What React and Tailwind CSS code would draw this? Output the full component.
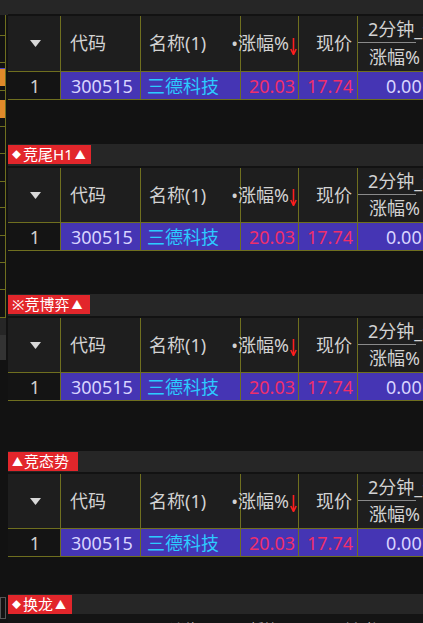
import React from 'react';

const font = "font-['Noto_Sans','Noto_Sans_CJK_SC',sans-serif]";

const sideRows = [
  { h: 'h-[27px]', fill: '' },
  { h: 'h-[28px]', fill: 'bg-[#e08a2a] border-t border-[#4a4ad0]' },
  { h: 'h-[36px]', fill: 'bg-[#e08a2a]' },
  { h: 'h-[27px]', fill: '' },
  { h: 'h-[28px]', fill: '' },
  { h: 'h-[26px]', fill: '' },
  { h: 'h-[28px]', fill: '' },
  { h: 'h-[27px]', fill: '' },
  { h: 'h-[27px]', fill: '' },
  { h: 'h-[28px]', fill: '' },
];

const SideStrip = () => (
  <div className="w-[8px] shrink-0 flex flex-col">
    <div className="h-[15px] bg-[#262626]" />
    <div className="h-[21px] w-[6px] border-r border-b border-[#6f6f1f]" />
    {sideRows.map((r, i) => (
      <div key={i} className={`${r.h} w-[6px] border-r border-b border-[#6f6f1f] flex items-center`}>
        {r.fill && <div className={`w-[5px] h-[18px] ${r.fill}`} />}
      </div>
    ))}
    <div className="h-[17px] w-[6px] bg-[#262626]" />
    <div className="h-[25px] w-[6px] bg-[#333333]" />
    <div className="flex-1" />
    <div className="h-[22px] w-[6px] border border-[#555555] mb-[4px]" />
  </div>
);

const SortArrow = () => (
  <svg width="7" height="17" viewBox="0 0 7 17" className="shrink-0 ml-[1px] mt-[5px]">
    <line x1="3.5" y1="0" x2="3.5" y2="15" stroke="#ff1e1e" strokeWidth="1.6" />
    <path d="M0.8 11 L3.5 16.5 L6.2 11" fill="none" stroke="#ff1e1e" strokeWidth="1.6" />
  </svg>
);

const Tab = ({ pre, text, post, w }) => (
  <div className={`${w} h-[19px] mt-px bg-[#e2262b] text-white text-[15px] leading-[19px] pl-[4px] whitespace-nowrap flex items-center`}>
    {pre === '◆' && <span className="text-[9px] mr-[2px]">◆</span>}
    {pre === '▲' && <span className="text-[11px] mr-[1px]">▲</span>}
    {pre === '※' && <span>※</span>}
    <span>{text}</span>
    {post && <span className="text-[11px] ml-[2px]">▲</span>}
  </div>
);

const Panel = ({ tab, barH, headH, emptyH }) => (
  <div className="flex flex-col">
    <div className={`${barH} bg-[#262626] flex items-start`}>
      {tab && <Tab {...tab} />}
    </div>
    <div className="h-[2px]" />

    <div className={`${headH} bg-[#1e1e1e] border-b border-[#6f6f1f] flex text-[18px] text-[#d2d2d2]`}>
      <div className="w-[53px] shrink-0 border-r border-[#6f6f1f] flex items-center justify-center pl-[2px]">
        <svg width="11" height="7" viewBox="0 0 11 7">
          <path d="M0 0 L11 0 L5.5 7 Z" fill="#d8d8d8" />
        </svg>
      </div>
      <div className="w-[80px] shrink-0 border-r border-[#6f6f1f] flex items-center pl-[9px]">代码</div>
      <div className="w-[100px] shrink-0 border-r border-[#6f6f1f] flex items-center pl-[8px] whitespace-nowrap">名称(1)</div>
      <div className="w-[58px] shrink-0 border-r border-[#6f6f1f] flex items-center justify-end pr-[1px] whitespace-nowrap">
        <span className="shrink-0">•涨幅%</span>
        <SortArrow />
      </div>
      <div className="w-[59px] shrink-0 border-r border-[#6f6f1f] flex items-center justify-end pr-[5px]">现价</div>
      <div className="w-[58px] shrink-0 flex flex-col">
        <div className="h-[27px] border-b border-[#8a8a8a] flex items-center pl-[10px] whitespace-nowrap">2分钟_云</div>
        <div className="flex-1 flex items-center pl-[11px] whitespace-nowrap">涨幅%</div>
      </div>
    </div>

    <div className="h-[28px] border-b border-[#6f6f1f] flex text-[18px] leading-none">
      <div className="w-[53px] shrink-0 bg-[#141414] border-r border-[#6f6f1f] flex items-center justify-center pl-[2px] text-[#d2d2d2]">1</div>
      <div className="w-[80px] shrink-0 bg-[#4535b4] border-r border-[#6f6f1f] flex items-center pl-[10px] text-[#d8d4ff]">300515</div>
      <div className="w-[100px] shrink-0 bg-[#4535b4] border-r border-[#6f6f1f] flex items-center pl-[6px] text-[#2ccbff]">三德科技</div>
      <div className="w-[58px] shrink-0 bg-[#4535b4] border-r border-[#6f6f1f] flex items-center justify-end pr-[3px] text-[#ef2f6b]">20.03</div>
      <div className="w-[59px] shrink-0 bg-[#4535b4] border-r border-[#6f6f1f] flex items-center justify-end pr-[4px] text-[#ef2f6b]">17.74</div>
      <div className="flex-1 bg-[#4535b4] flex items-center pl-[28px] text-[#d8d4ff] whitespace-nowrap">0.00</div>
    </div>

    <div className={`${emptyH} bg-[#121212]`} />
  </div>
);

export default function App() {
  return (
    <div className={`w-[423px] h-[623px] overflow-hidden bg-[#121212] flex ${font}`}>
      <SideStrip />
      <div className="flex-1 min-w-0 flex flex-col">
        <Panel barH="h-[14px]" headH="h-[56px]" emptyH="h-[44px]" />
        <Panel tab={{ pre: '◆', text: '竞尾H1', post: true, w: 'w-[83px]' }} barH="h-[22px]" headH="h-[55px]" emptyH="h-[43px]" />
        <Panel tab={{ pre: '※', text: '竞博弈', post: true, w: 'w-[82px]' }} barH="h-[22px]" headH="h-[55px]" emptyH="h-[50px]" />
        <Panel tab={{ pre: '▲', text: '竞态势', post: false, w: 'w-[70px]' }} barH="h-[21px]" headH="h-[55px]" emptyH="h-[37px]" />
        <div className="h-[21px] bg-[#262626] flex items-start">
          <Tab pre="◆" text="换龙" post w="w-[64px]" />
        </div>
        <div className="h-[20px] bg-[#141414] flex items-start pt-[4px] text-[14px] text-[#bdbdbd] whitespace-nowrap">
          <span className="ml-[162px]">涨停原因</span>
          <span className="ml-[24px]">板块</span>
          <span className="ml-[52px]">更新时间</span>
        </div>
      </div>
    </div>
  );
}
